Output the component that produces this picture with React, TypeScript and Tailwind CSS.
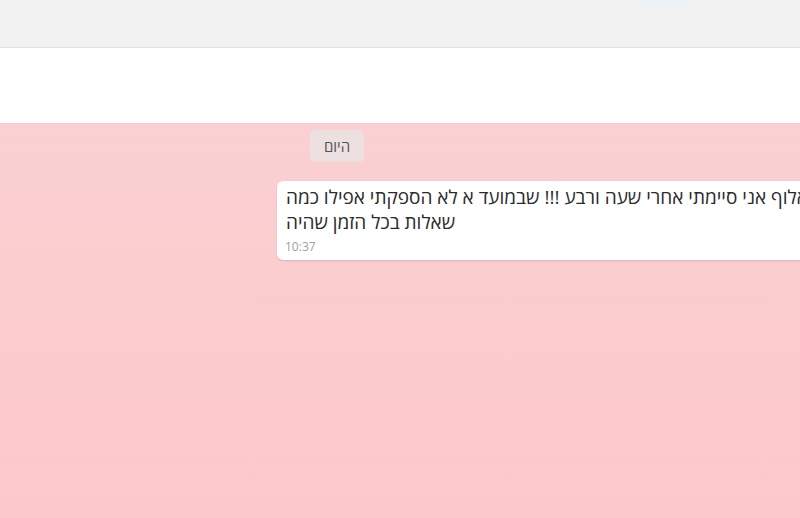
export default function App() {
  return (
    <div
      className="w-[800px] h-[518px] overflow-hidden flex flex-col"
      style={{ fontFamily: '"Open Sans", "DejaVu Sans", sans-serif' }}
    >
      {/* Top bar */}
      <header className="h-[48px] shrink-0 bg-[#f2f2f2] border-b border-[#e2e2e2] relative">
        <div className="absolute top-0 left-[640px] w-[50px] h-[8px] bg-[#eef1f5]" />
      </header>

      {/* White strip */}
      <div className="h-[75px] shrink-0 bg-white" />

      {/* Chat area */}
      <main className="flex-1 bg-gradient-to-b from-[#fad0d2] to-[#fdc8ca] border-t border-[#f3c9cb] pt-[6px]">
        <div className="flex">
          <div className="ml-[310px] h-[32px] w-[54px] rounded-[5px] bg-[#ede0e1] flex items-center justify-center text-[15px] text-[#555]">
            היום
          </div>
        </div>

        <div className="mt-[19px] ml-[277px] w-[575px] rounded-[6px] bg-white shadow-[0_1px_2px_rgba(0,0,0,0.12)] pl-[9px] pr-[10px] pt-[4px] pb-[6px]">
          <p dir="rtl" className="text-left text-[19px] leading-[25px] text-[#2b2b2b]">
            אלוף אני סיימתי אחרי שעה ורבע !!! שבמועד א לא הספקתי אפילו כמה שאלות בכל הזמן שהיה
          </p>
          <div className="text-[12px] leading-[15px] text-[#a0a0a0] mt-[4px] -ml-[1px]">10:37</div>
        </div>
      </main>
    </div>
  );
}
